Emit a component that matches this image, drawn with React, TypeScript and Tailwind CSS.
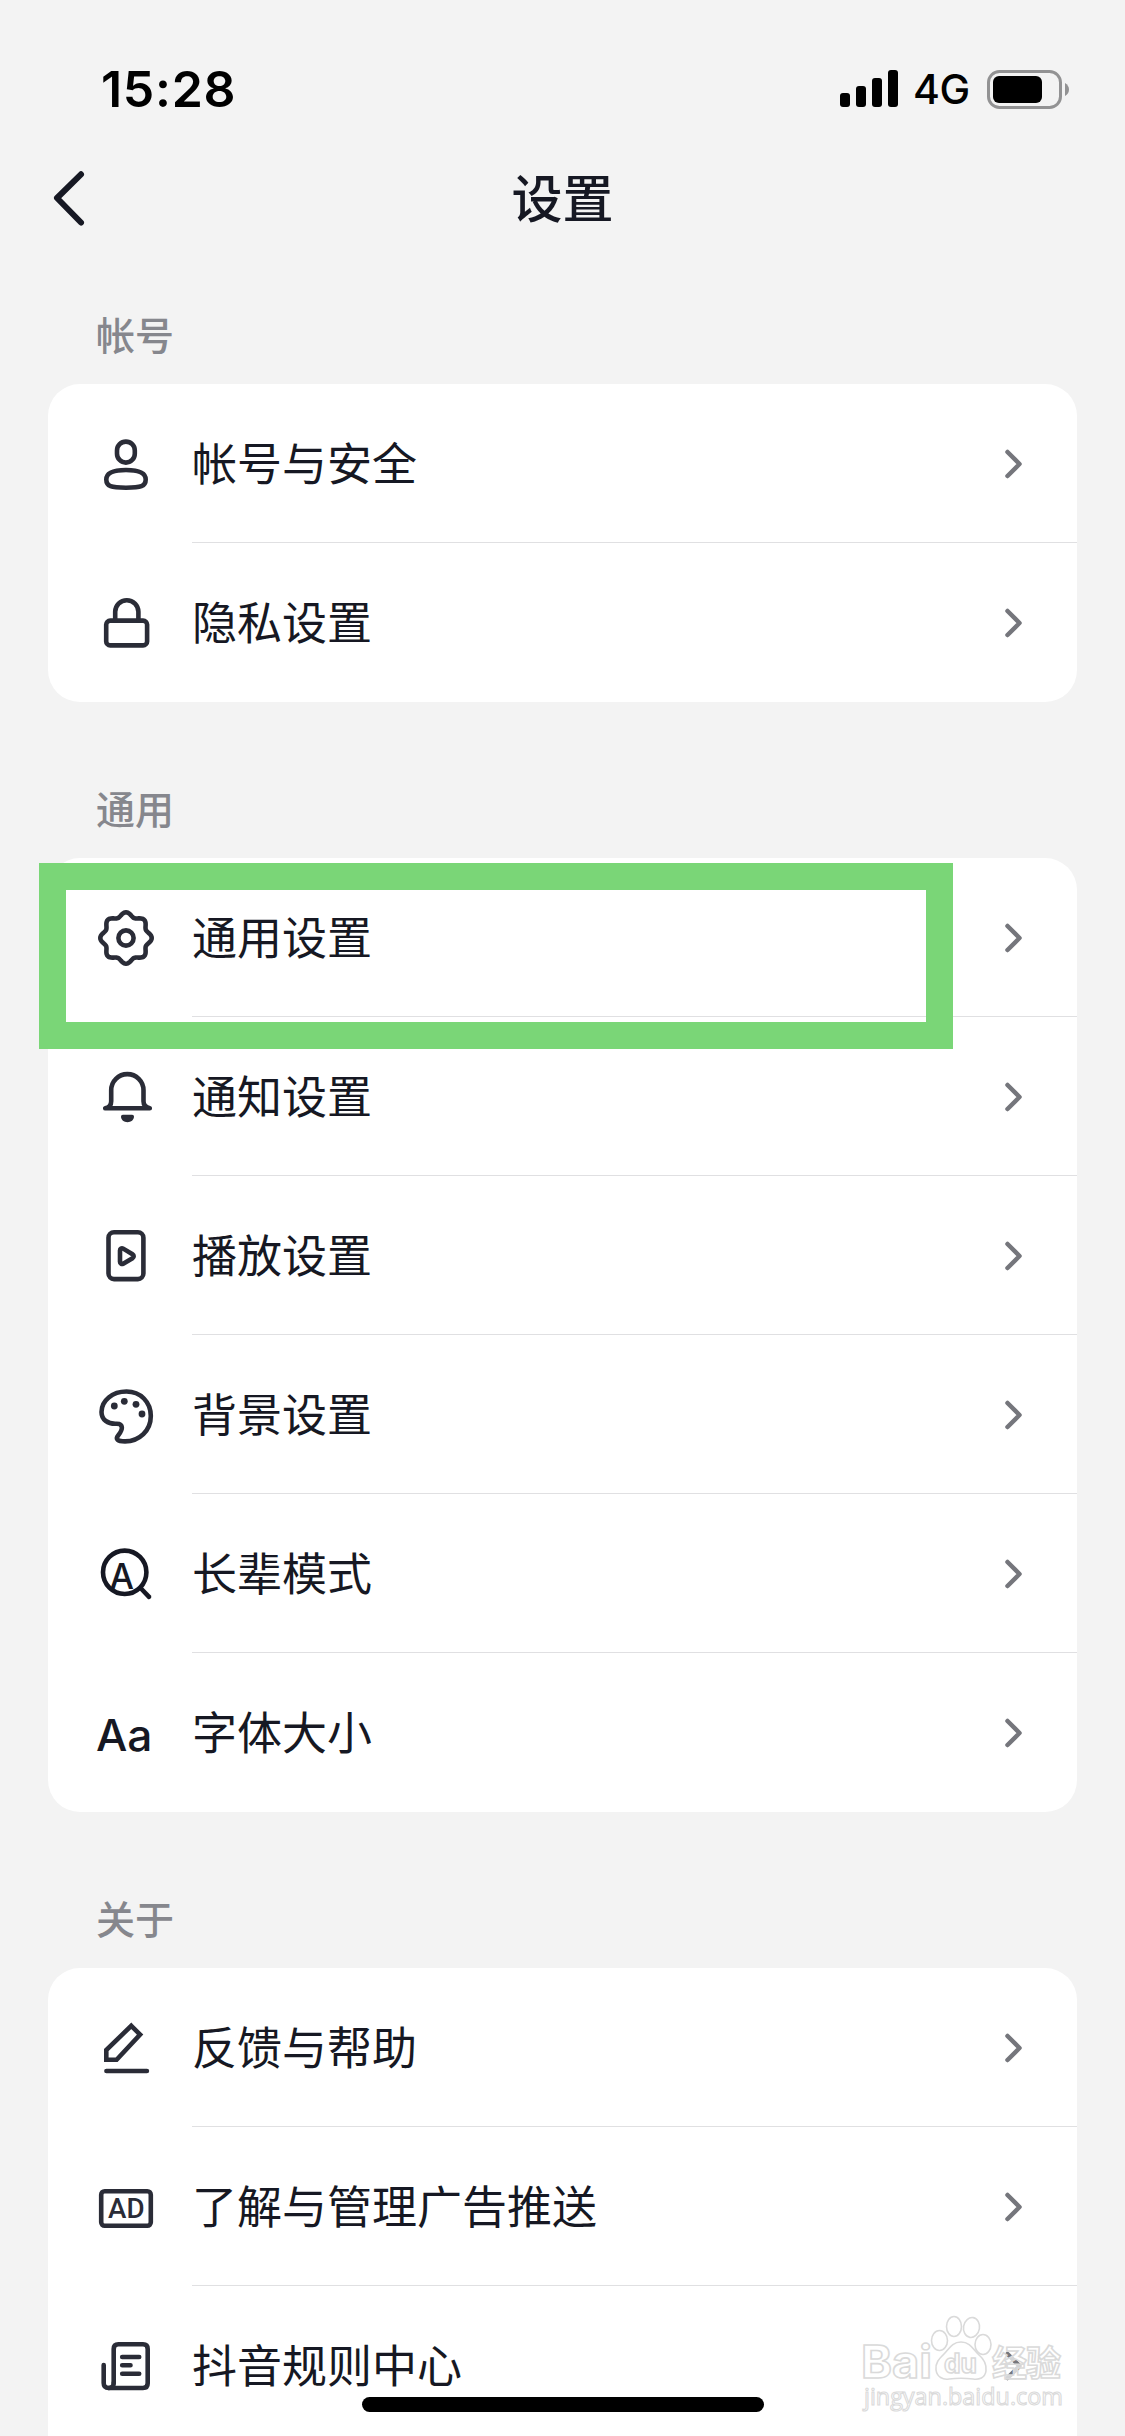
import { ReactNode } from "react";

interface IconProps {
  children: ReactNode;
}

const Icon = ({ children }: IconProps) => (
  <svg
    className="w-[60px] h-[61px] shrink-0 overflow-visible text-[#2a2c37]"
    viewBox="0 0 60 61"
    fill="none"
    stroke="currentColor"
    strokeWidth={4.6}
    strokeLinecap="round"
    strokeLinejoin="round"
  >
    {children}
  </svg>
);

const UserIcon = () => (
  <Icon>
    <rect x="21" y="8.6" width="17.8" height="21" rx="8.9" />
    <path d="M10.3 46.5C10.3 39.5 17 37 30 37s19.7 2.5 19.7 9.5c0 6.8-4.7 8.2-19.7 8.2s-19.7-1.4-19.7-8.2z" />
  </Icon>
);

const LockIcon = () => (
  <Icon>
    <rect x="10.2" y="28.6" width="40.9" height="24.8" rx="4" />
    <path d="M19.2 28.6v-8.8a11.6 11.6 0 0 1 23.2 0v8.8" />
  </Icon>
);

// eight rounded lobes around the centre
const gearPath =
  Array.from({ length: 144 }, (_, i) => {
    const angle = (i / 144) * Math.PI * 2;
    const r = 23.6 + 2.1 * Math.cos(angle * 8);
    const x = 30 + r * Math.cos(angle);
    const y = 31 + r * Math.sin(angle);
    return `${i === 0 ? "M" : "L"}${x.toFixed(2)} ${y.toFixed(2)}`;
  }).join("") + "Z";

const GearIcon = () => (
  <Icon>
    <path d={gearPath} />
    <circle cx="30" cy="31" r="7.6" />
  </Icon>
);

const BellIcon = () => (
  <Icon>
    <path d="M9.2 42.3h44.6c-4-.8-6.3-3-6.3-7V24.3a16.1 16.1 0 0 0-32.3 0v11c0 4-2 6.2-6 7z" />
    <path
      d="M25 50.5q0-1.800 1.800-1.800h9.400q1.800 0 1.800 1.800c0 3.500-3 5.700-6.500 5.700s-6.500-2.200-6.500-5.700z"
      fill="currentColor"
      stroke="none"
    />
  </Icon>
);

const PlayIcon = () => (
  <Icon>
    <rect x="12.5" y="7.2" width="34.9" height="46.9" rx="5.5" />
    <path d="M24 25.4v11.4c0 2 1.7 2.7 3.2 1.9l9.3-5.5c1.6-1 1.6-3 0-4l-9.300-5.600c-1.500-.9-3.200-.1-3.200 1.800z" />
  </Icon>
);

const PaletteIcon = () => (
  <Icon>
    <path d="M5.5 28C5.5 16.5 16.5 7.5 30.5 7.5 44.5 7.5 54.8 18 54.8 32 54.8 46.5 43.5 57.4 29 57.4c-7.500 0-10-2.200-6.500-6.400 4.500-5.500 5-11.300-1.800-11.300C11.500 40.200 5.500 35.500 5.500 28z" />
    <g fill="currentColor" stroke="none">
      <circle cx="18.3" cy="22" r="3.4" />
      <circle cx="28.3" cy="17.3" r="3.4" />
      <circle cx="40" cy="20.3" r="3.4" />
      <circle cx="46" cy="30" r="3.4" />
    </g>
  </Icon>
);

const ElderIcon = () => (
  <Icon>
    <g className="text-[#161823]" stroke="currentColor">
      <circle cx="28.7" cy="29.3" r="21.7" />
      <path d="M45 45.5l8 8.3" />
      <text
        x="13.5"
        y="46"
        fontSize="36"
        fill="currentColor"
        stroke="none"
        textLength="24.5"
        lengthAdjust="spacingAndGlyphs"
        className="font-['Inter',sans-serif] font-medium"
      >
        A
      </text>
    </g>
  </Icon>
);

const FontIcon = () => (
  <Icon>
    <text
      x="0"
      y="48.7"
      fontSize="43.5"
      fill="#161823"
      stroke="none"
      textLength="56.5"
      lengthAdjust="spacingAndGlyphs"
      className="font-['Inter',sans-serif] font-medium"
    >
      Aa
    </text>
  </Icon>
);

const EditIcon = () => (
  <Icon>
    <path
      d="M35.3 8.8l8.8 8.8-23.5 25.2H10.3V33z"
      strokeLinejoin="miter"
    />
    <path d="M10.4 54h40.5" />
  </Icon>
);

const AdIcon = () => (
  <Icon>
    <rect x="5.2" y="15.2" width="49.6" height="34.6" rx="3.5" />
    <text
      x="12"
      y="42.3"
      fontSize="28.5"
      fill="currentColor"
      stroke="none"
      textLength="36.500"
      lengthAdjust="spacingAndGlyphs"
      className="font-['Roboto',sans-serif] font-medium"
    >
      AD
    </text>
  </Icon>
);

const RulesIcon = () => (
  <Icon>
    <path d="M17.7 48V14q0-4.7 4.7-4.7H47q4.7 0 4.7 4.7v34.3q0 4.7-4.7 4.7H12.7q-5 0-5-5V30" />
    <path d="M17.7 48q0 5-5 5" />
    <path d="M26.2 22h17M26.2 30.3h8.3M26.2 38.8h17" />
  </Icon>
);

const sections = [
  {
    title: "帐号",
    items: [
      { label: "帐号与安全", icon: <UserIcon /> },
      { label: "隐私设置", icon: <LockIcon /> },
    ],
  },
  {
    title: "通用",
    items: [
      { label: "通用设置", icon: <GearIcon />, highlighted: true },
      { label: "通知设置", icon: <BellIcon /> },
      { label: "播放设置", icon: <PlayIcon /> },
      { label: "背景设置", icon: <PaletteIcon /> },
      { label: "长辈模式", icon: <ElderIcon /> },
      { label: "字体大小", icon: <FontIcon /> },
    ],
  },
  {
    title: "关于",
    items: [
      { label: "反馈与帮助", icon: <EditIcon /> },
      { label: "了解与管理广告推送", icon: <AdIcon /> },
      { label: "抖音规则中心", icon: <RulesIcon /> },
    ],
  },
];

const StatusBar = () => (
  <div className="h-[132px] flex items-start justify-between pl-[101px] pr-[56px] pt-[59px] text-black font-['Inter',sans-serif]">
    <span className="text-[50px] leading-[60px] font-semibold tracking-[0.7px]">
      15:28
    </span>
    <div className="flex items-center h-[60px]">
      <svg className="w-[58px] h-[38px]" viewBox="0 0 58 38">
        <rect x="0" y="23" width="10" height="14" rx="3" />
        <rect x="16" y="16" width="10" height="21" rx="3" />
        <rect x="32" y="8" width="10" height="29" rx="3" />
        <rect x="48" y="0" width="10" height="37" rx="3" />
      </svg>
      <span className="ml-[15px] w-[74px] text-[41px] leading-[60px] font-medium tracking-[-0.5px] whitespace-nowrap">
        4G
      </span>
      <svg className="w-[82px] h-[39px]" viewBox="0 0 82 39">
        <rect
          x="1.5"
          y="1.5"
          width="72"
          height="36"
          rx="11"
          fill="none"
          stroke="#929293"
          strokeWidth="3"
        />
        <rect x="6" y="6" width="49" height="27" rx="6" />
        <path d="M78 13q4 2.500 4 6.500t-4 6.500z" fill="#929293" />
      </svg>
    </div>
  </div>
);

const NavBar = () => (
  <header className="h-[132px] grid grid-cols-3 items-center px-[51px]">
    <svg
      className="w-9 h-[60px]"
      viewBox="0 0 36 60"
      fill="none"
      stroke="#161823"
      strokeWidth={6}
      strokeLinecap="round"
      strokeLinejoin="round"
    >
      <path d="M30 6.3L6 30l24 24.500" />
    </svg>
    <h1 className="text-center text-[51px] leading-[60px] font-medium -mt-1">
      设置
    </h1>
  </header>
);

interface RowProps {
  icon: ReactNode;
  label: string;
  last: boolean;
  highlighted?: boolean;
}

const Row = ({ icon, label, last, highlighted }: RowProps) => (
  <li className="relative h-[159px] flex items-center pl-12">
    {icon}
    <div
      className={`ml-9 h-full flex-1 flex items-center justify-between pr-[53px] border-b ${
        last ? "border-transparent" : "border-[#e0e0e2]"
      }`}
    >
      <span className="text-[45px] leading-[60px] -mt-0.5">{label}</span>
      <svg
        className="w-[21px] h-8"
        viewBox="0 0 21 32"
        fill="none"
        stroke="#75767c"
        strokeWidth={4.5}
        strokeLinecap="round"
        strokeLinejoin="round"
      >
        <path d="M4.5 5l12 12-12 12" />
      </svg>
    </div>
    {highlighted && (
      <div className="absolute z-10 -left-[9px] top-[5px] w-[914px] h-[186px] border-[27px] border-[#7ad677]" />
    )}
  </li>
);

const Watermark = () => (
  <svg
    className="absolute left-[855px] top-[2305px] w-[220px] h-[115px]"
    viewBox="0 0 220 115"
    fill="#ffffff"
    fillOpacity={0.7}
    stroke="#dadada"
    strokeWidth={1.6}
  >
    <ellipse cx="84.5" cy="35.5" rx="8" ry="10" />
    <ellipse cx="99" cy="21.500" rx="7.5" ry="10" />
    <ellipse cx="116.5" cy="22.5" rx="8" ry="10" transform="rotate(10 116.5 22.5)" />
    <ellipse cx="128" cy="39.5" rx="8" ry="10" />
    <path d="M106 37c9 0 12 7 17 12 6 5 9 10 8 17-1 7-7 9-13 8-8-1-16-1-24 0-6 1-12-2-13-9-1-7 3-11 8-16 5-5 8-12 17-12z" />
    <g className="font-['Inter',sans-serif] font-bold">
      <text x="6" y="73" fontSize="45" textLength="71" lengthAdjust="spacingAndGlyphs">
        Bai
      </text>
      <text x="89" y="68" fontSize="27" textLength="33" lengthAdjust="spacingAndGlyphs">
        du
      </text>
    </g>
    <text
      x="137"
      y="71"
      fontSize="35"
      textLength="69"
      className="font-['Noto_Sans_CJK_SC',sans-serif] font-bold"
    >
      经验
    </text>
    <text
      x="9"
      y="100"
      fontSize="24"
      strokeWidth={1.1}
      textLength="199"
      lengthAdjust="spacingAndGlyphs"
      className="font-['Open_Sans',sans-serif] font-medium"
    >
      jingyan.baidu.com
    </text>
  </svg>
);

const App = () => {
  return (
    <div className="relative w-[1125px] h-[2436px] overflow-hidden bg-[#f3f3f3] text-[#161823] font-['Noto_Sans_CJK_SC',sans-serif]">
      <StatusBar />
      <NavBar />
      <main className="px-12 flex flex-col gap-9">
        {sections.map(({ title, items }) => (
          <section key={title}>
            <h2 className="h-[120px] pt-[45px] pl-12 text-[39px] leading-[48px] font-medium text-[#86878d]">
              {title}
            </h2>
            <ul
              className={`bg-white rounded-[32px] ${
                title === "关于" ? "pb-12" : ""
              }`}
            >
              {items.map((item, i) => (
                <Row key={item.label} {...item} last={i === items.length - 1} />
              ))}
            </ul>
          </section>
        ))}
      </main>
      <Watermark />
      <div className="absolute left-[362px] top-[2397px] w-[402px] h-[15px] rounded-full bg-black" />
    </div>
  );
};

export default App;
